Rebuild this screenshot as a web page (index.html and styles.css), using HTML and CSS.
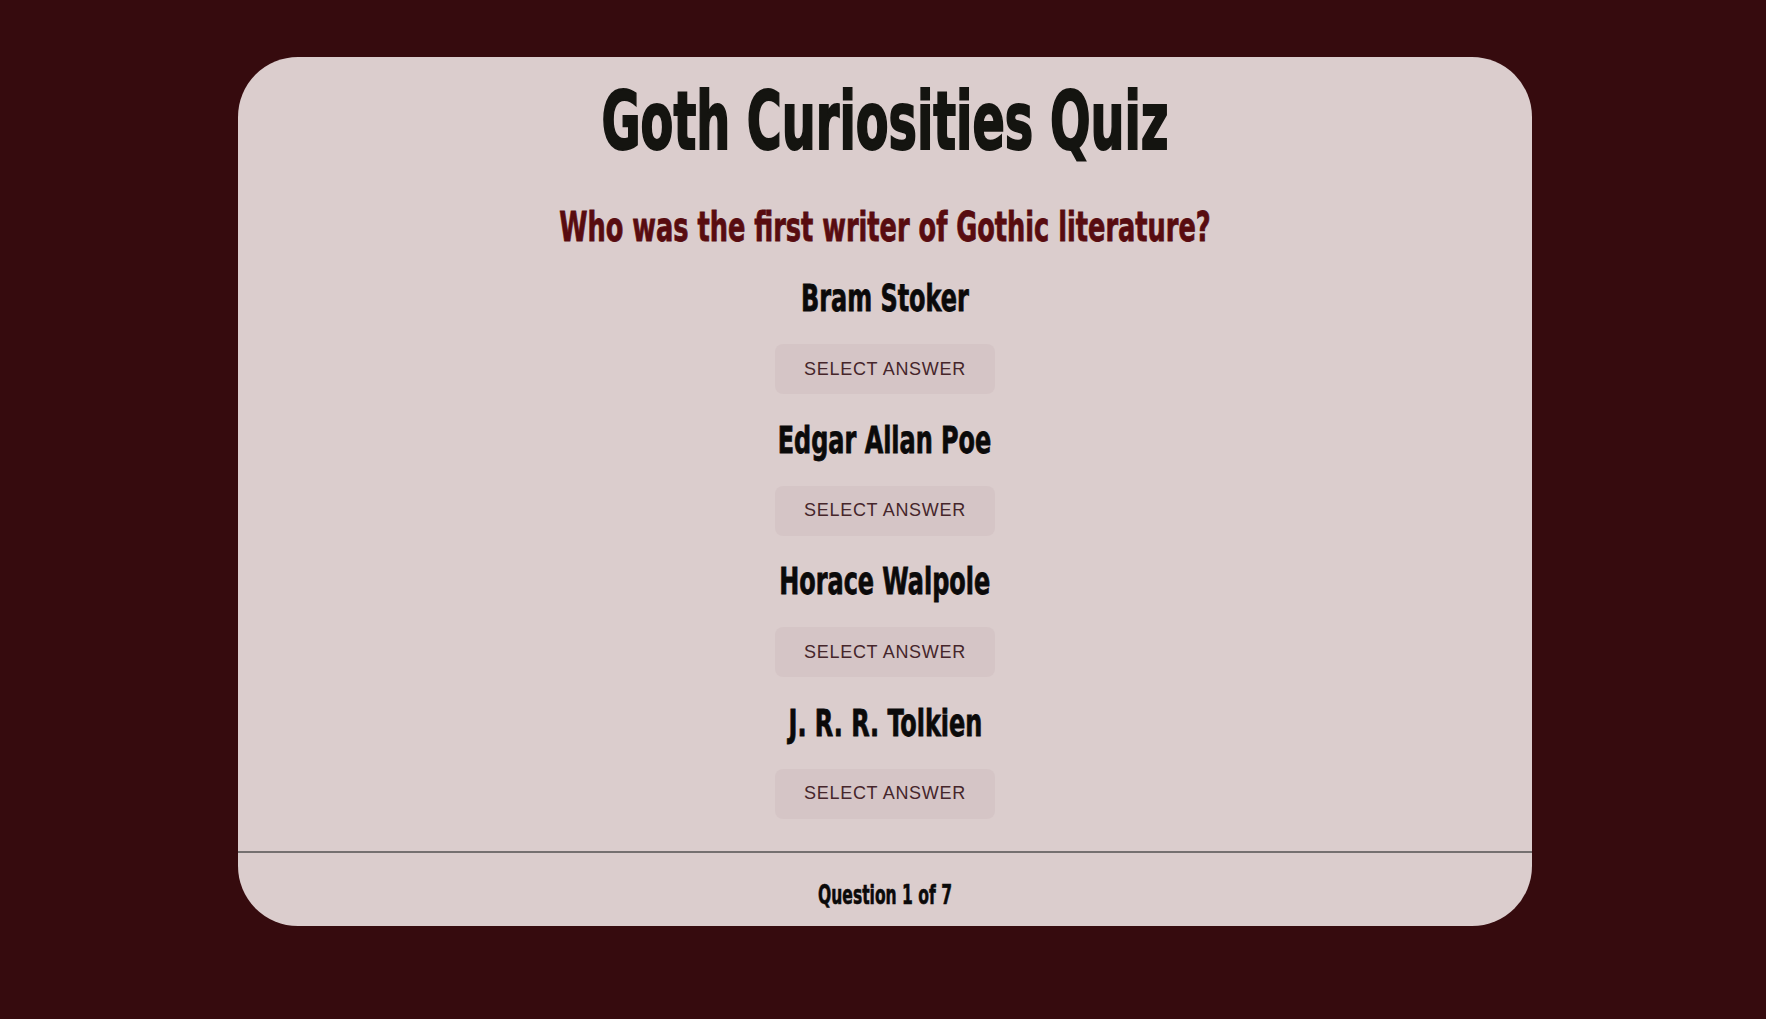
FILE: index.html
```html
<!DOCTYPE html>
<html lang="en">
<head>
<meta charset="utf-8">
<title>Goth Curiosities Quiz</title>
<link rel="stylesheet" href="styles.css">
</head>
<body>
<main class="quiz">
  <h1 class="quiz-title">Goth Curiosities Quiz</h1>
  <h2 class="question">Who was the first writer of Gothic literature?</h2>
  <ul class="answers">
    <li class="answer">
      <h3 class="answer-text">Bram Stoker</h3>
      <button class="select-btn" type="button">Select Answer</button>
    </li>
    <li class="answer">
      <h3 class="answer-text">Edgar Allan Poe</h3>
      <button class="select-btn" type="button">Select Answer</button>
    </li>
    <li class="answer">
      <h3 class="answer-text">Horace Walpole</h3>
      <button class="select-btn" type="button">Select Answer</button>
    </li>
    <li class="answer">
      <h3 class="answer-text">J. R. R. Tolkien</h3>
      <button class="select-btn" type="button">Select Answer</button>
    </li>
  </ul>
  <hr class="divider">
  <p class="progress">Question 1 of 7</p>
</main>
</body>
</html>
```
FILE: styles.css
```css
html, body {
  margin: 0;
  padding: 0;
}

body {
  background: #360b0e;
  min-height: 1019px;
}

.quiz {
  width: 1294px;
  margin: 57px 0 0 238px;
  padding: 14px 0 11px;
  box-sizing: border-box;
  background: #dbcdcd;
  border-radius: 60px;
  text-align: center;
}

.quiz-title,
.question,
.answer-text,
.progress {
  font-family: "DejaVu Sans Condensed", "DejaVu Sans", sans-serif;
  font-stretch: condensed;
  font-weight: bold;
  margin: 0;
  white-space: nowrap;
}

.quiz-title {
  font-size: 81px;
  line-height: 100px;
  color: #141410;
  -webkit-text-stroke: 2px #141410;
  transform: scaleX(0.655);
}

.question {
  margin-top: 31px;
  font-size: 40px;
  line-height: 50px;
  color: #580c10;
  -webkit-text-stroke: 0.8px #580c10;
  transform: scaleX(0.712);
}

.answers {
  list-style: none;
  margin: 21px 0 0;
  padding: 0;
  display: flex;
  flex-direction: column;
  gap: 20.5px;
}

.answer {
  display: flex;
  flex-direction: column;
  align-items: center;
  gap: 21px;
}

.answer-text {
  font-size: 38px;
  line-height: 50px;
  color: #0b0a0a;
  -webkit-text-stroke: 0.8px #0b0a0a;
  transform: scaleX(0.70);
}

.select-btn {
  width: 220px;
  height: 50px;
  border: none;
  border-radius: 8px;
  background: #d5c5c6;
  color: #45262b;
  font-family: "Liberation Sans", Arial, sans-serif;
  font-size: 18px;
  letter-spacing: 0.7px;
  text-transform: uppercase;
  padding: 0;
  cursor: pointer;
}

.divider {
  margin: 32px 0 0;
  border: none;
  height: 2px;
  background: #757070;
}

.progress {
  margin-top: 22px;
  font-size: 27px;
  line-height: 40px;
  color: #0b0a0a;
  -webkit-text-stroke: 0.6px #0b0a0a;
  transform: scaleX(0.64);
}
```
